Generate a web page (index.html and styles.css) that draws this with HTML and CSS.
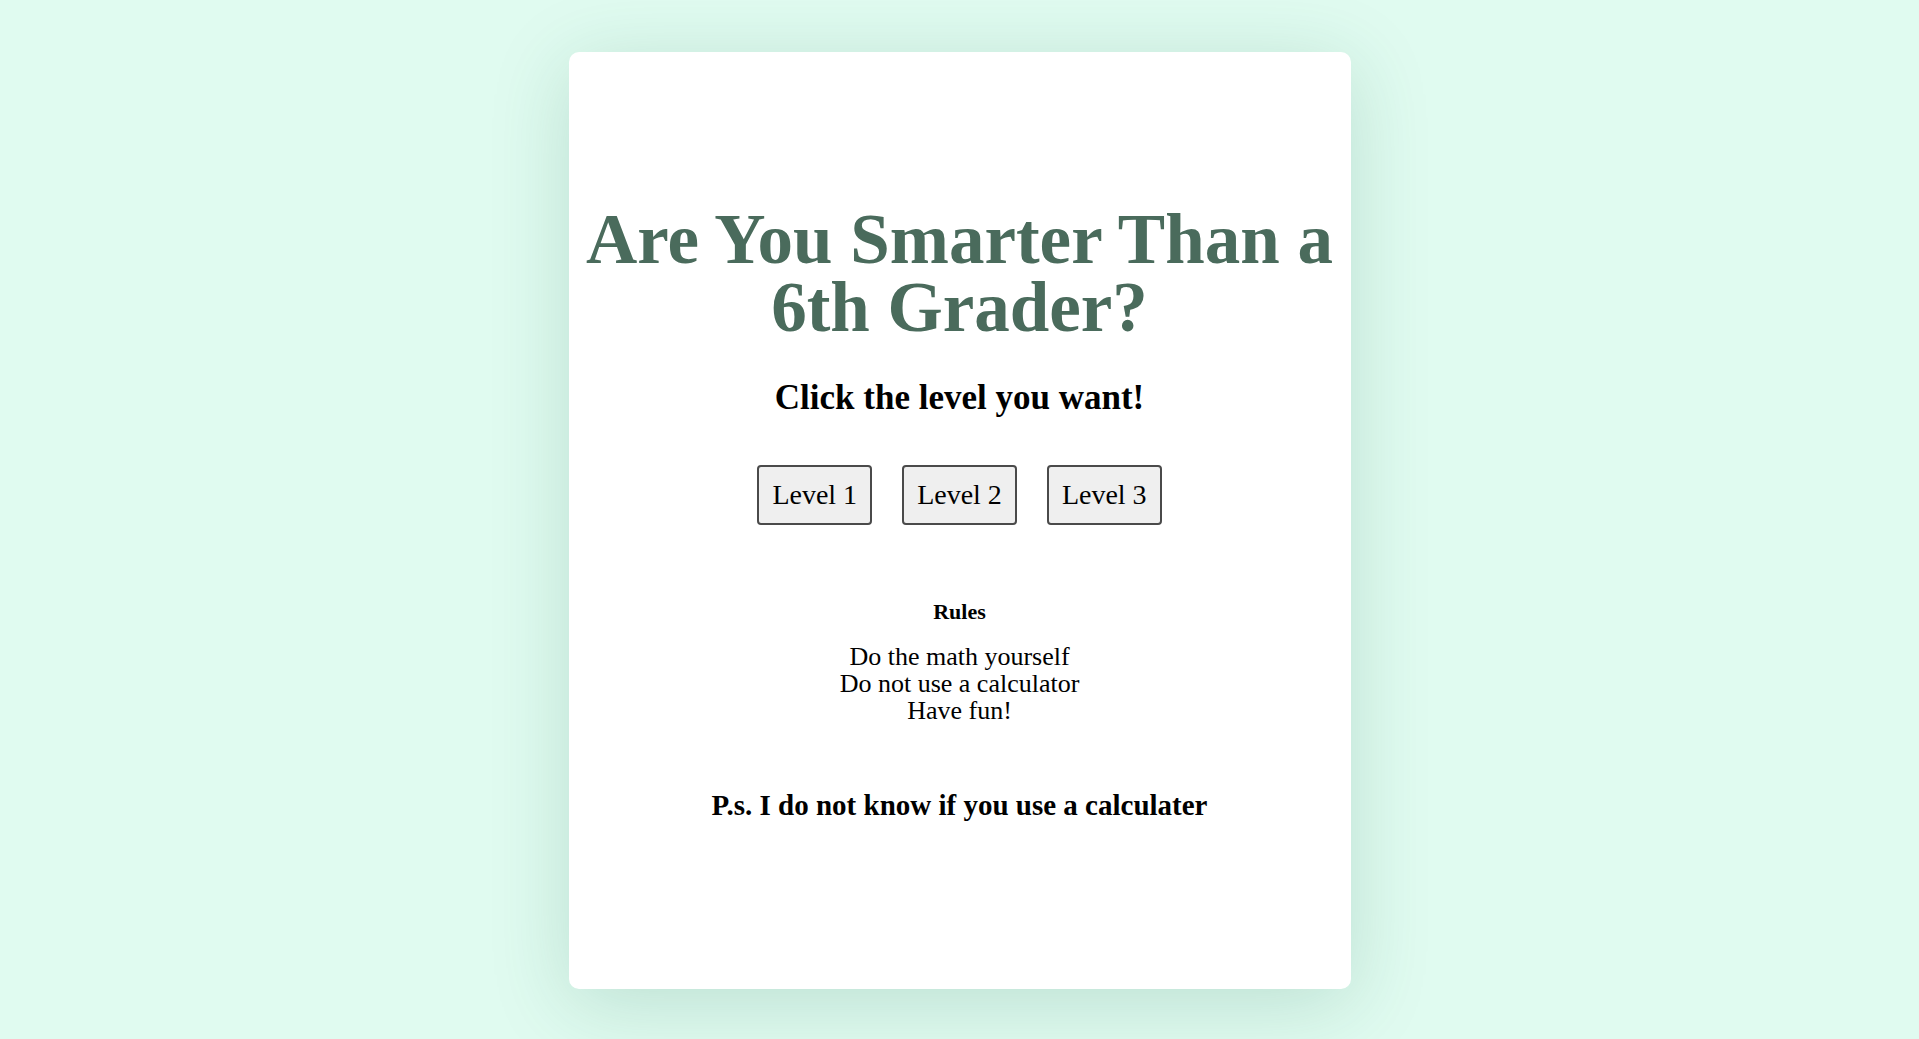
FILE: index.html
```html
<!DOCTYPE html>
<html lang="en">
<head>
    <meta charset="UTF-8">
    <meta name="viewport" content="width=device-width, initial-scale=1.0">
    <title>Are You Smarter Than a 6th Grader?</title>
    <link rel="stylesheet" href="styles.css">
</head>
<body>

    <div class="card">
        <h1 class="title">Are You Smarter Than a 6th Grader?</h1>
        <h2 class="subtitle">Click the level you want!</h2>

        <div class="levels">
            <button class="level-button">Level 1</button>
            <button class="level-button">Level 2</button>
            <button class="level-button">Level 3</button>
        </div>

        <h3 class="rules-title">Rules</h3>
        <p class="rules">
            Do the math yourself<br>
            Do not use a calculator<br>
            Have fun!
        </p>

        <h3 class="note">P.s. I do not know if you use a calculater</h3>
    </div>

</body>
</html>
```

FILE: styles.css
```css
/* page */
body {
    margin: 0;
    min-height: 100vh;
    display: flex;
    justify-content: center;
    align-items: flex-start;
    background-color: #e0fbf0;
    font-family: Georgia, 'Liberation Serif', serif;
}

/* white card */
.card {
    box-sizing: border-box;
    width: 782px;
    height: 937px;
    margin-top: 52px;
    padding: 153px 12px 0;
    background-color: #ffffff;
    border-radius: 10px;
    box-shadow: 0 14px 80px rgba(20, 100, 70, 0.18);
    text-align: center;
}

.title {
    margin: 0;
    font-size: 71px;
    line-height: 68px;
    font-weight: bold;
    color: #4a6b5c;
}

.subtitle {
    margin: 37px 0 0;
    font-size: 35px;
    line-height: 40px;
    font-weight: bold;
    color: #000;
}

/* level buttons */
.levels {
    display: flex;
    justify-content: center;
    gap: 30px;
    margin-top: 47px;
}

.level-button {
    font-family: inherit;
    font-size: 28px;
    line-height: 32px;
    padding: 12px 13px;
    color: #000;
    background-color: #efefef;
    border: 2px solid #4a4a4a;
    border-radius: 4px;
    cursor: pointer;
}

.level-button:hover {
    background-color: #e3e3e3;
}

.rules-title {
    margin: 74px 0 0;
    font-size: 22px;
    line-height: 26px;
    font-weight: bold;
}

.rules {
    margin: 18px 0 0;
    font-size: 26px;
    line-height: 27px;
}

.note {
    margin: 65px 0 0;
    font-size: 29px;
    line-height: 32px;
    font-weight: bold;
}
```
